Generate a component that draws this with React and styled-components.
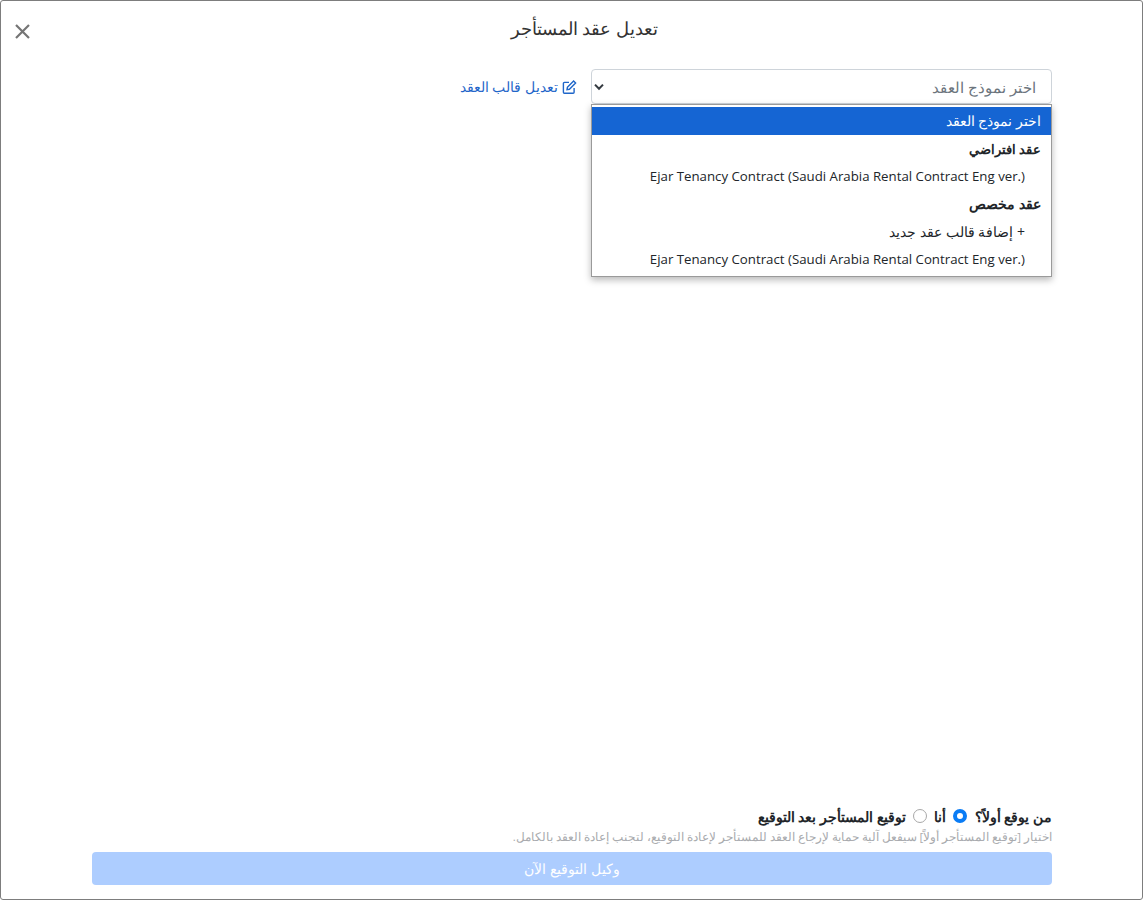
import React from 'react';
import styled, { createGlobalStyle } from 'styled-components';

const Global = createGlobalStyle`
  html, body { margin: 0; padding: 0; background: #fff; }
  body { font-family: "Open Sans", "Noto Sans", sans-serif; color: #212529; }
  * { box-sizing: border-box; }
`;

const Modal = styled.div`
  width: 1143px;
  height: 900px;
  border: 1px solid #7d7d7d;
  border-radius: 3px;
  display: flex;
  flex-direction: column;
  background: #fff;
`;

const Header = styled.header`
  height: 68px;
  flex: none;
  display: flex;
  align-items: flex-start;
  padding: 18px 4px 0 12px;
`;

const Title = styled.h1`
  flex: 1;
  margin: 0;
  font-size: 17.8px;
  line-height: 18px;
  font-weight: 400;
  color: #333;
  text-align: center;
  direction: rtl;
`;

const CloseButton = styled.button`
  border: 0;
  background: none;
  padding: 0;
  margin-top: 2px;
  width: 18px;
  height: 20px;
  display: flex;
  align-items: center;
  justify-content: center;
  flex: none;
`;

const Main = styled.main`
  flex: 1;
  width: 960px;
  margin-left: 91px;
  direction: rtl;
`;

const SelectRow = styled.div`
  display: flex;
  align-items: center;
  gap: 14px;
`;

const SelectWrap = styled.div`
  position: relative;
  width: 461px;
  flex: none;
`;

const SelectBox = styled.div`
  height: 35px;
  border: 1px solid #ced4da;
  border-radius: 4px;
  display: flex;
  align-items: center;
  justify-content: space-between;
  padding: 0 15px 0 2px;
  font-size: 14.7px;
  color: #6c757d;
  background: #fff;
`;

const Menu = styled.ul`
  position: absolute;
  top: 35px;
  left: 0;
  right: 0;
  margin: 0;
  padding: 2px 0 2.4px;
  list-style: none;
  background: #fff;
  border: 1px solid #9a9a9a;
  box-shadow: 0 3px 7px rgba(0, 0, 0, 0.28);
`;

const Option = styled.li`
  height: 27.7px;
  display: flex;
  align-items: center;
  padding-right: ${p => (p.$group || p.$selected ? '10px' : '26px')};
  font-size: ${p => p.$size || '14px'};
  font-weight: ${p => (p.$group ? 700 : 400)};
  color: ${p => (p.$selected ? '#fff' : '#212529')};
  background: ${p => (p.$selected ? '#1565d3' : 'transparent')};
`;

const EditLink = styled.a`
  display: flex;
  align-items: center;
  gap: 4px;
  font-size: 14px;
  color: #1f66c9;
  text-decoration: none;
`;

const Footer = styled.footer`
  flex: none;
  width: 960px;
  margin-left: 91px;
  margin-bottom: 14px;
  direction: rtl;
`;

const WhoRow = styled.div`
  display: flex;
  align-items: center;
  height: 20px;
  font-size: 14px;
  font-weight: 700;
  color: #212529;
`;

const RadioOption = styled.label`
  display: inline-flex;
  align-items: center;
  gap: 7px;
  margin-right: ${p => p.$offset || '8px'};
  font-size: ${p => p.$size || 'inherit'};
`;

const RadioDot = styled.span`
  width: 14px;
  height: 14px;
  border-radius: 50%;
  flex: none;
  background: #fff;
  border: ${p => (p.$checked ? '4px solid #0a7cf5' : '1px solid #a8a8a8')};
`;

const Hint = styled.p`
  margin: 3px 0 8px;
  font-size: 11.5px;
  line-height: 15px;
  color: #a9abae;
  white-space: nowrap;
`;

const Submit = styled.button`
  display: block;
  width: 100%;
  height: 33px;
  border: 0;
  border-radius: 4px;
  background: #adcdff;
  color: #fff;
  font-family: inherit;
  font-size: 14.3px;
  text-align: center;
`;

const Chevron = () => (
  <svg width="10" height="8" viewBox="0 0 10 8" fill="none">
    <path d="M1 1.6 5 5.8 9 1.6" stroke="#343a40" strokeWidth="2" />
  </svg>
);

const EditIcon = () => (
  <svg width="15" height="14" viewBox="0 0 15 14" fill="none" stroke="#1f66c9" strokeWidth="1.4">
    <path d="M7 2.4H2.4a1 1 0 0 0-1 1v8.9a1 1 0 0 0 1 1h8.7a1 1 0 0 0 1-1V8" />
    <path d="M5.4 7.3 11.6 1.1l2 2-6.2 6.2-2.4.4z" />
  </svg>
);

export default function App() {
  return (
    <>
      <Global />
      <Modal>
        <Header>
          <CloseButton aria-label="close">
            <svg width="17" height="17" viewBox="0 0 17 17" fill="none">
              <path d="M2 2 15 15M15 2 2 15" stroke="#757575" strokeWidth="2.2" />
            </svg>
          </CloseButton>
          <Title>تعديل عقد المستأجر</Title>
        </Header>
        <Main>
          <SelectRow>
            <SelectWrap>
              <SelectBox>
                <span>اختر نموذج العقد</span>
                <Chevron />
              </SelectBox>
              <Menu>
                <Option $selected>اختر نموذج العقد</Option>
                <Option $group $size="13px">عقد افتراضي</Option>
                <Option $size="13.25px">Ejar Tenancy Contract (Saudi Arabia Rental Contract Eng ver.)</Option>
                <Option $group $size="14.4px">عقد مخصص</Option>
                <Option>+ إضافة قالب عقد جديد</Option>
                <Option $size="13.25px">Ejar Tenancy Contract (Saudi Arabia Rental Contract Eng ver.)</Option>
              </Menu>
            </SelectWrap>
            <EditLink href="#">
              <EditIcon />
              <span>تعديل قالب العقد</span>
            </EditLink>
          </SelectRow>
        </Main>
        <Footer>
          <WhoRow>
            <span>من يوقع أولاً؟</span>
            <RadioOption><RadioDot $checked /><span>أنا</span></RadioOption>
            <RadioOption $size="14.4px" $offset="7px"><RadioDot /><span>توقيع المستأجر بعد التوقيع</span></RadioOption>
          </WhoRow>
          <Hint>اختيار [توقيع المستأجر أولاً] سيفعل آلية حماية لإرجاع العقد للمستأجر لإعادة التوقيع، لتجنب إعادة العقد بالكامل.</Hint>
          <Submit type="button">وكيل التوقيع الآن</Submit>
        </Footer>
      </Modal>
    </>
  );
}
